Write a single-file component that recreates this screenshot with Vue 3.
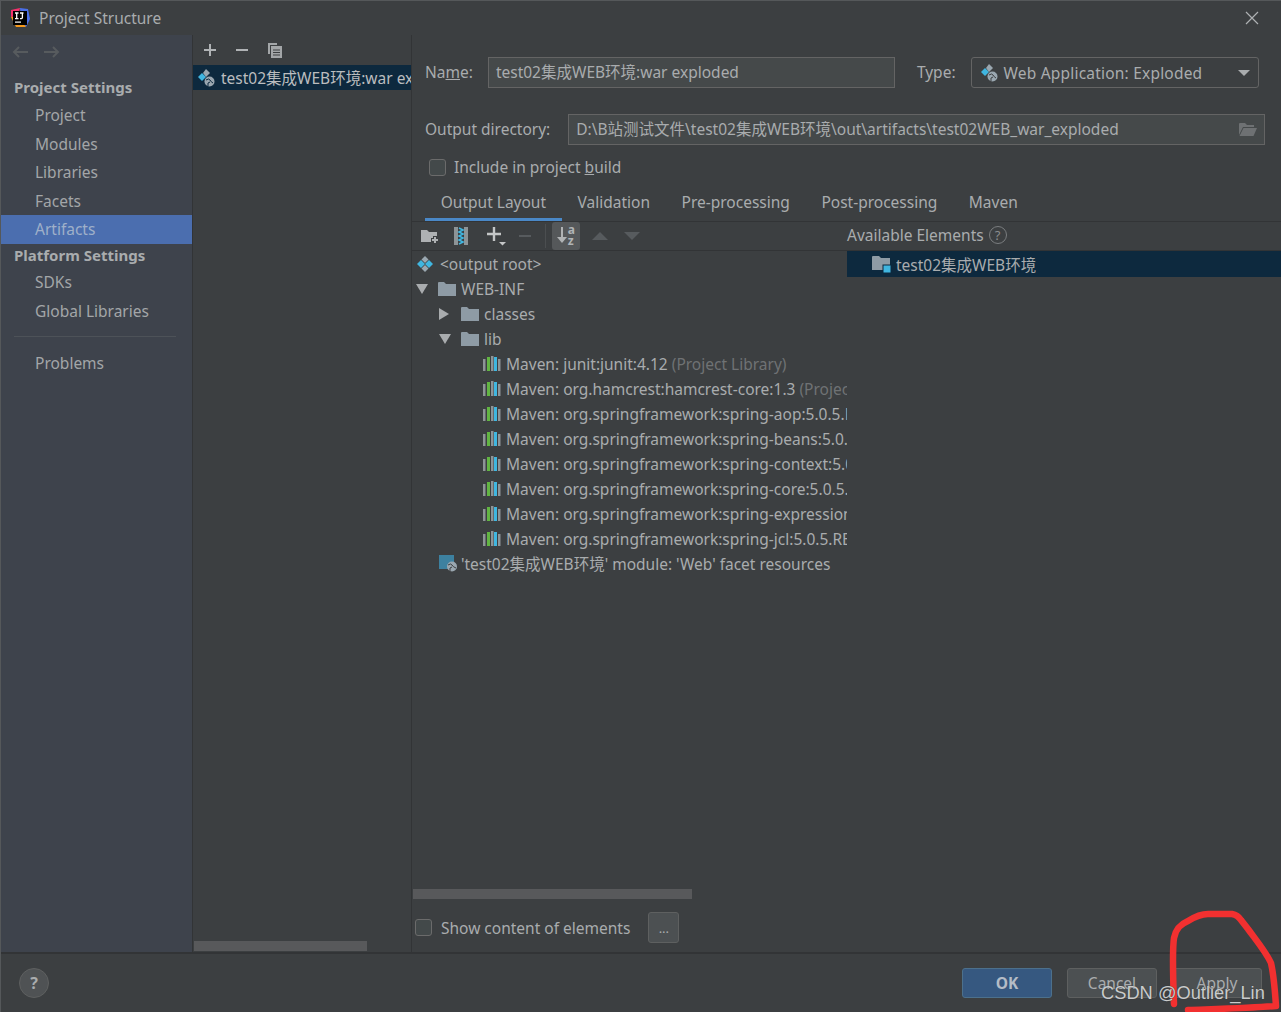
<script setup>
const sidebarTop = ['Project', 'Modules', 'Libraries', 'Facets', 'Artifacts']
const sidebarBottom = ['SDKs', 'Global Libraries']
const tabs = ['Output Layout', 'Validation', 'Pre-processing', 'Post-processing', 'Maven']
const libs = [
	{ name: 'Maven: junit:junit:4.12', hint: ' (Project Library)' },
	{ name: 'Maven: org.hamcrest:hamcrest-core:1.3', hint: ' (Project Library)' },
	{ name: 'Maven: org.springframework:spring-aop:5.0.5.RELEASE', hint: '' },
	{ name: 'Maven: org.springframework:spring-beans:5.0.5.RELEASE', hint: '' },
	{ name: 'Maven: org.springframework:spring-context:5.0.5.RELEASE', hint: '' },
	{ name: 'Maven: org.springframework:spring-core:5.0.5.RELEASE', hint: '' },
	{ name: 'Maven: org.springframework:spring-expression:5.0.5.RELEASE', hint: '' },
	{ name: 'Maven: org.springframework:spring-jcl:5.0.5.RELEASE', hint: '' }
]
</script>

<template>
	<div class="dialog">
		<header class="titlebar">
			<svg class="logo" width="20" height="20" viewBox="0 0 20 20">
				<path d="M1 2 L10 0 L8 8 L1 9 Z" fill="#f5316d" />
				<path d="M10 0 L18 1 L20 11 L16 19 L11 12 Z" fill="#4a6fe8" />
				<path d="M1 9 L6 19 L16 19 L8 8 Z" fill="#f79a1c" />
				<rect x="3" y="3" width="14" height="14" fill="#000" />
				<rect x="5" y="13.5" width="6" height="1.2" fill="#fff" />
				<path d="M5 5 h3.5 M6.7 5 v5.6 M5 10.6 h3.5 M10 5 h3.5 M12.4 5 v4.6 q0 1 -1 1 h-1.4" stroke="#fff" stroke-width="1.3" fill="none" />
			</svg>
			<span class="title">Project Structure</span>
			<svg class="close" width="14" height="14" viewBox="0 0 14 14">
				<path d="M1 1 L13 13 M13 1 L1 13" stroke="#aeb1b3" stroke-width="1.2" />
			</svg>
		</header>

		<div class="body">
			<aside class="sidebar">
				<div class="nav-arrows">
					<svg width="18" height="14" viewBox="0 0 18 14"><path d="M17 7 H3 M8 2 L3 7 L8 12" stroke="#575b5e" stroke-width="2" fill="none" /></svg>
					<svg width="18" height="14" viewBox="0 0 18 14"><path d="M1 7 H15 M10 2 L15 7 L10 12" stroke="#575b5e" stroke-width="2" fill="none" /></svg>
				</div>
				<div class="side-head">Project Settings</div>
				<div v-for="item in sidebarTop" :key="item" class="side-item" :class="{ selected: item === 'Artifacts' }">{{ item }}</div>
				<div class="side-head second">Platform Settings</div>
				<div v-for="item in sidebarBottom" :key="item" class="side-item">{{ item }}</div>
				<div class="side-divider"></div>
				<div class="side-item">Problems</div>
			</aside>

			<section class="artifacts">
				<div class="art-toolbar">
					<svg width="14" height="14" viewBox="0 0 14 14"><path d="M7 1 V13 M1 7 H13" stroke="#b0b3b5" stroke-width="2" /></svg>
					<svg width="14" height="14" viewBox="0 0 14 14"><path d="M1 7 H13" stroke="#b0b3b5" stroke-width="2" /></svg>
					<svg width="16" height="16" viewBox="0 0 16 16"><path d="M1 1 H10 V3 H3 V12 H1 Z" fill="#a3a6a8" /><path d="M4 4 H15 V16 H4 Z" fill="#a3a6a8" /><path d="M6 8 H13 M6 10.5 H13 M6 13 H13" stroke="#3c3f41" /></svg>
				</div>
				<div class="art-row">
					<svg class="ico" width="18" height="18" viewBox="0 0 18 18">
						<path d="M5 4 L9 8 L5 12 L1 8 Z" fill="#40b6e0" />
						<path d="M9 0 L13 4 L9 8 L6 4 Z" fill="#9aa7b0" />
						<circle cx="12.5" cy="12.5" r="5" fill="#9aa7b0" />
						<path d="M9 11 Q12 9 13 11 T16 14 M11 17 Q10 13 13 13" stroke="#0d293e" fill="none" />
					</svg>
					<span class="art-name">test02集成WEB环境:war exploded</span>
				</div>
				<div class="spacer"></div>
				<div class="art-scroll"><div class="thumb"></div></div>
			</section>

			<main class="editor">
				<div class="name-row">
					<label class="lbl">Na<u>m</u>e:</label>
					<div class="field name-field">test02集成WEB环境:war exploded</div>
					<label class="lbl type-lbl">Type:</label>
					<div class="combo">
						<svg class="ico" width="18" height="18" viewBox="0 0 18 18">
							<path d="M5 4 L9 8 L5 12 L1 8 Z" fill="#40b6e0" />
							<path d="M9 0 L13 4 L9 8 L6 4 Z" fill="#9aa7b0" />
							<circle cx="12.5" cy="12.5" r="5" fill="#9aa7b0" />
							<path d="M9 11 Q12 9 13 11 T16 14 M11 17 Q10 13 13 13" stroke="#3c3f41" fill="none" />
						</svg>
						<span class="combo-text">Web Application: Exploded</span>
						<span class="combo-arrow"></span>
					</div>
				</div>
				<div class="dir-row">
					<label class="lbl">Output directory:</label>
					<div class="field dir-field">
						<span>D:\B站测试文件\test02集成WEB环境\out\artifacts\test02WEB_war_exploded</span>
						<svg width="20" height="16" viewBox="0 0 20 16"><path d="M1 3 Q1 2 2 2 H7 L9 4 H16 V6 H5 L1 14 Z" fill="#6e7173" /><path d="M5.5 7 H19 L15.5 15 H1.5 Z" fill="#6e7173" /></svg>
					</div>
				</div>
				<div class="check-row">
					<span class="check"></span>
					<span>Include in project <u>b</u>uild</span>
				</div>
				<nav class="tabs">
					<div v-for="(tab, i) in tabs" :key="tab" class="tab" :class="{ active: i === 0 }">{{ tab }}</div>
				</nav>

				<div class="layout">
					<div class="tree-pane">
						<div class="tree-toolbar">
							<svg width="20" height="18" viewBox="0 0 20 18"><path d="M1 3 H7 L9 5 H17 V15 H1 Z" fill="#aeb1b3" /><path d="M15 9 V17 M11 13 H19" stroke="#3c3f41" stroke-width="4" /><path d="M15 10 V16 M12 13 H18" stroke="#aeb1b3" stroke-width="2" /></svg>
							<svg class="tool-zip" width="16" height="20" viewBox="0 0 16 20"><rect x="1" y="1" width="14" height="18" fill="#8d9497" /><rect x="5" y="1" width="6" height="18" fill="#3c3f41" /><path d="M6 2 L10 4 L6 6 L10 8 L6 10 L10 12 L6 14 L10 16 L6 18" stroke="#40b6e0" stroke-width="1.6" fill="none" /></svg>
							<svg class="tool-add" width="20" height="20" viewBox="0 0 20 20"><path d="M8 1 V15 M1 8 H15" stroke="#c4c6c7" stroke-width="2.4" /><path d="M13 16 H20 L16.5 19.5 Z" fill="#c4c6c7" /></svg>
							<svg class="tool-minus" width="14" height="14" viewBox="0 0 14 14"><path d="M1 7 H13" stroke="#575b5e" stroke-width="2" /></svg>
							<span class="tool-sep"></span>
							<span class="sort-btn">
								<svg width="20" height="20" viewBox="0 0 20 20"><path d="M7 1 V12" stroke="#b0b3b5" stroke-width="2" /><path d="M2 11 H12 L7 17 Z" fill="#b0b3b5" /></svg>
								<span class="az">a<br />z</span>
							</span>
							<svg width="16" height="9" viewBox="0 0 16 9"><path d="M8 0 L16 8 H0 Z" fill="#575b5e" /></svg>
							<svg class="tool-down" width="16" height="9" viewBox="0 0 16 9"><path d="M0 0 H16 L8 8 Z" fill="#575b5e" /></svg>
						</div>

						<div class="tree">
							<div class="node indent-0">
								<svg class="ico" width="18" height="18" viewBox="0 0 18 18">
									<path d="M5 5 L9 9 L5 13 L1 9 Z" fill="#40b6e0" /><path d="M13 5 L17 9 L13 13 L9 9 Z" fill="#40b6e0" />
									<path d="M9 1 L12.5 4.5 L9 8 L5.5 4.5 Z" fill="#9aa7b0" /><path d="M9 10 L12.5 13.5 L9 17 L5.5 13.5 Z" fill="#9aa7b0" />
								</svg>
								<span>&lt;output root&gt;</span>
							</div>
							<div class="node indent-0">
								<span class="caret down"></span>
								<svg class="folder" width="18" height="14" viewBox="0 0 18 14"><path d="M0 1 Q0 0 1 0 H6 L8 2 H18 V14 H0 Z" fill="#8e9ba5" /></svg>
								<span>WEB-INF</span>
							</div>
							<div class="node indent-1">
								<span class="caret right"></span>
								<svg class="folder" width="18" height="14" viewBox="0 0 18 14"><path d="M0 1 Q0 0 1 0 H6 L8 2 H18 V14 H0 Z" fill="#8e9ba5" /></svg>
								<span>classes</span>
							</div>
							<div class="node indent-1">
								<span class="caret down"></span>
								<svg class="folder" width="18" height="14" viewBox="0 0 18 14"><path d="M0 1 Q0 0 1 0 H6 L8 2 H18 V14 H0 Z" fill="#8e9ba5" /></svg>
								<span>lib</span>
							</div>
							<div v-for="lib in libs" :key="lib.name" class="node indent-2">
								<svg class="ico-lib" width="18" height="15" viewBox="0 0 18 15">
									<rect x="0" y="3" width="2.5" height="12" fill="#8d9497" />
									<rect x="4" y="1" width="3" height="14" fill="#62b543" />
									<rect x="8" y="0" width="2.5" height="15" fill="#8d9497" />
									<rect x="11" y="1" width="3" height="14" fill="#40b6e0" />
									<rect x="15" y="3" width="2.5" height="12" fill="#8d9497" />
								</svg>
								<span class="clip">{{ lib.name }}<span class="hint">{{ lib.hint }}</span></span>
							</div>
							<div class="node indent-facet">
								<svg class="ico" width="19" height="17" viewBox="0 0 19 17">
									<rect x="0" y="0" width="15" height="14" fill="#3d81a0" />
									<circle cx="13" cy="11.5" r="5" fill="#9aa7b0" />
									<path d="M9 10 Q12 8 13 10 T17 13 M11 16 Q10 12 13 12" stroke="#3c3f41" fill="none" />
								</svg>
								<span>'test02集成WEB环境' module: 'Web' facet resources</span>
							</div>
						</div>

						<div class="tree-scroll"><div class="thumb"></div></div>
						<div class="show-row">
							<span class="check"></span>
							<span>Show content of elements</span>
							<span class="dots">...</span>
						</div>
					</div>

					<div class="avail-pane">
						<div class="avail-head">
							<span>Available Elements</span>
							<span class="help-small">?</span>
						</div>
						<div class="avail-row">
							<svg class="folder" width="20" height="18" viewBox="0 0 20 18">
								<path d="M0 2 Q0 1 1 1 H7 L9 3 H18 V15 H0 Z" fill="#8e9ba5" />
								<rect x="11" y="10" width="8" height="8" fill="#40b6e0" stroke="#0d293e" />
							</svg>
							<span>test02集成WEB环境</span>
						</div>
					</div>
				</div>
			</main>
		</div>

		<footer class="footer">
			<span class="help">?</span>
			<span class="btn ok">OK</span>
			<span class="btn cancel">Cancel</span>
			<span class="btn apply">Apply</span>
		</footer>

		<svg class="scribble" width="120" height="110" viewBox="0 0 120 110">
			<path d="M8 98 C7 70 6 45 8 32 C10 22 15 18 22 15 C30 10 36 8 42 8 L66 8 C71 9 73 11 75 14 L82 23 C90 34 100 46 105 57 C108 70 109 85 110 100 C90 102 50 103 22 104" fill="none" stroke="#f23030" stroke-width="6.5" stroke-linecap="round" stroke-linejoin="round" />
		</svg>
		<div class="watermark">CSDN @Outlier_Lin</div>
	</div>
</template>

<style scoped>
.dialog {
	position: relative;
	width: 1281px;
	height: 1012px;
	display: flex;
	flex-direction: column;
	overflow: hidden;
	background: #3c3f41;
	color: #b4b7b9;
	font-family: "Noto Sans", "Noto Sans CJK SC", sans-serif;
	font-size: 15.5px;
	box-sizing: border-box;
	border-top: 1px solid #55585a;
	border-left: 1px solid #55585a;
}

.titlebar {
	height: 34px;
	flex: none;
	display: flex;
	align-items: center;
	padding-left: 9px;
}

.title {
	margin-left: 9px;
	color: #a9acae;
}

.close {
	margin-left: auto;
	margin-right: 22px;
}

.body {
	flex: 1;
	min-height: 0;
	display: flex;
	border-bottom: 2px solid #323436;
}

.sidebar {
	width: 191px;
	flex: none;
	background: #3e434c;
	border-right: 1px solid #323436;
}

.nav-arrows {
	height: 34px;
	display: flex;
	align-items: center;
	gap: 14px;
	padding-left: 10px;
}

.side-head {
	height: 27px;
	line-height: 27px;
	padding-left: 13px;
	margin-top: 5px;
	font-size: 15px;
	font-weight: 700;
	color: #a9acae;
}

.side-head.second {
	margin-top: 0;
	height: 24px;
	line-height: 22px;
}

.side-item {
	height: 28.6px;
	line-height: 28.6px;
	padding-left: 34px;
	color: #a3a6a8;
}

.side-item.selected {
	background: #4b6eaf;
	color: #9fb0c9;
}

.side-divider {
	height: 1px;
	margin: 11px 16px 12px 13px;
	background: #4d5258;
}

.artifacts {
	width: 218px;
	flex: none;
	display: flex;
	flex-direction: column;
	border-right: 1px solid #323436;
}

.art-toolbar {
	height: 30px;
	flex: none;
	display: flex;
	align-items: center;
	gap: 18px;
	padding-left: 10px;
}

.art-row {
	height: 25px;
	flex: none;
	display: flex;
	align-items: center;
	background: #0d293e;
	padding-left: 4px;
	overflow: hidden;
	white-space: nowrap;
	color: #bbbdbf;
}

.ico {
	flex: none;
}

.art-name {
	margin-left: 6px;
	flex: none;
}

.spacer {
	flex: 1;
}

.art-scroll {
	height: 11px;
	padding-left: 1px;
}

.art-scroll .thumb {
	width: 173px;
	height: 10px;
	background: #58595b;
}

.editor {
	flex: 1;
	min-width: 0;
	display: flex;
	flex-direction: column;
}

.lbl {
	color: #a9acae;
	white-space: nowrap;
	margin-bottom: 2px;
}

.name-row {
	height: 31px;
	margin-top: 22px;
	padding-left: 13px;
	display: flex;
	align-items: center;
	flex: none;
}

.field {
	background: #45494a;
	border: 1px solid #646464;
	box-sizing: border-box;
	color: #a9acae;
	display: flex;
	align-items: center;
	white-space: nowrap;
	padding-left: 7px;
	padding-bottom: 2px;
}

.name-field {
	width: 407px;
	height: 31px;
	margin-left: 15px;
}

.type-lbl {
	margin-left: 22px;
}

.combo {
	width: 288px;
	height: 31px;
	margin-left: 15px;
	box-sizing: border-box;
	border: 1px solid #646464;
	border-radius: 3px;
	display: flex;
	align-items: center;
	padding-left: 8px;
	color: #a9acae;
}

.combo-text {
	margin-left: 6px;
	letter-spacing: 0.2px;
}

.combo-arrow {
	margin-left: auto;
	margin-right: 8px;
	border-left: 6px solid transparent;
	border-right: 6px solid transparent;
	border-top: 6px solid #a9acae;
}

.dir-row {
	height: 31px;
	margin-top: 26px;
	padding-left: 13px;
	display: flex;
	align-items: center;
	flex: none;
}

.dir-field {
	width: 697px;
	height: 31px;
	margin-left: 18px;
	flex: none;
	justify-content: space-between;
	padding-right: 6px;
}

.check-row {
	height: 24px;
	margin-top: 10px;
	padding-left: 17px;
	display: flex;
	align-items: center;
	gap: 8px;
	flex: none;
	color: #a9acae;
}

.check {
	width: 17px;
	height: 17px;
	flex: none;
	background: #43494a;
	border: 1px solid #6b6b6b;
	border-radius: 3px;
	box-sizing: border-box;
}

.tabs {
	height: 33px;
	margin-top: 9px;
	padding-left: 13px;
	display: flex;
	flex: none;
	border-bottom: 1px solid #323436;
}

.tab {
	padding: 3px 15.75px 0;
	color: #a9acae;
	white-space: nowrap;
}

.tab.active {
	border-bottom: 3px solid #4a88c7;
}

.layout {
	flex: 1;
	min-height: 0;
	display: flex;
}

.tree-pane {
	width: 435px;
	flex: none;
	display: flex;
	flex-direction: column;
}

.tree-toolbar {
	height: 29px;
	flex: none;
	display: flex;
	align-items: center;
	gap: 10px;
	padding-left: 8px;
	border-bottom: 1px solid #323436;
	box-sizing: border-box;
	width: 1000px;
}

.tool-zip {
	margin-left: 3px;
}

.tool-add {
	margin-left: 7px;
}

.tool-minus {
	margin-left: 2px;
}

.tool-sep {
	width: 1px;
	height: 24px;
	margin-left: 3px;
	background: #4b4e50;
}

.sort-btn {
	width: 28px;
	height: 28px;
	margin-left: -4px;
	margin-right: 2px;
	background: #55585a;
	border-radius: 3px;
	position: relative;
	display: flex;
	align-items: center;
	padding-left: 3px;
	box-sizing: border-box;
}

.az {
	position: absolute;
	right: 5px;
	top: 2px;
	font-size: 12px;
	line-height: 11px;
	font-weight: 700;
	color: #b0b3b5;
}

.tool-down {
	margin-left: 6px;
}

.tree {
	flex: 1;
	min-height: 0;
}

.node {
	height: 25px;
	display: flex;
	align-items: center;
	white-space: nowrap;
	overflow: hidden;
	color: #a9acae;
}

.indent-0 {
	padding-left: 4px;
}

.indent-1 {
	padding-left: 27px;
}

.indent-2 {
	padding-left: 71px;
}

.indent-facet {
	padding-left: 27px;
}

.indent-0 .ico {
	margin-right: 6px;
}

.indent-facet .ico {
	margin-right: 3px;
}

.caret {
	width: 12px;
	height: 12px;
	flex: none;
	margin-right: 10px;
	display: flex;
	box-sizing: border-box;
}

.caret.down {
	border-left: 6px solid transparent;
	border-right: 6px solid transparent;
	border-top: 10px solid #a9acae;
	margin-top: 2px;
}

.caret.right {
	border-top: 6px solid transparent;
	border-bottom: 6px solid transparent;
	border-left: 10px solid #a9acae;
}

.folder {
	margin-right: 5px;
	flex: none;
}

.ico-lib {
	margin-right: 5px;
	flex: none;
}

.hint {
	color: #6f7274;
}

.tree-scroll {
	height: 10px;
	flex: none;
	padding-left: 1px;
}

.tree-scroll .thumb {
	width: 279px;
	height: 10px;
	background: #58595b;
}

.show-row {
	height: 31px;
	margin: 13px 0 9px;
	padding-left: 3px;
	display: flex;
	align-items: center;
	gap: 9px;
	flex: none;
	color: #a9acae;
}

.dots {
	width: 31px;
	height: 31px;
	margin-left: 9px;
	box-sizing: border-box;
	background: #4c5052;
	border: 1px solid #5e6060;
	border-radius: 3px;
	display: flex;
	align-items: center;
	justify-content: center;
	font-size: 13px;
}

.avail-pane {
	flex: 1;
	min-width: 0;
}

.avail-head {
	height: 25px;
	display: flex;
	align-items: center;
	gap: 5px;
	color: #a9acae;
	position: relative;
}

.help-small {
	width: 18px;
	height: 18px;
	box-sizing: border-box;
	border: 1.5px solid #7a7d7f;
	border-radius: 50%;
	display: flex;
	align-items: center;
	justify-content: center;
	font-size: 13px;
	color: #8a8d8f;
}

.avail-row {
	height: 26px;
	margin-top: 4px;
	background: #0d293e;
	display: flex;
	align-items: center;
	padding-left: 25px;
	color: #a9acae;
	white-space: nowrap;
	position: relative;
}

.avail-row .folder {
	margin-right: 4px;
}

.footer {
	height: 58px;
	flex: none;
	display: flex;
	align-items: center;
	padding-left: 18px;
}

.help {
	width: 30px;
	height: 30px;
	border-radius: 50%;
	background: #4f5254;
	border: 1px solid #5e6060;
	box-sizing: border-box;
	display: flex;
	align-items: center;
	justify-content: center;
	font-weight: 700;
	font-size: 16px;
	color: #a9acae;
}

.btn {
	width: 90px;
	height: 30px;
	box-sizing: border-box;
	border-radius: 3px;
	display: flex;
	align-items: center;
	justify-content: center;
	margin-left: 15px;
	background: #4c5052;
	border: 1px solid #5e6060;
	color: #a9acae;
}

.btn.ok {
	margin-left: auto;
	background: #365880;
	border-color: #4c708c;
	font-weight: 700;
	color: #b4bcc6;
}

.btn.apply {
	margin-right: 19px;
}

.scribble {
	position: absolute;
	left: 1165px;
	top: 905px;
	pointer-events: none;
}

.watermark {
	position: absolute;
	left: 1100px;
	top: 978px;
	font-family: "Liberation Sans", sans-serif;
	font-size: 18.3px;
	line-height: 28px;
	color: #c9cbcc;
	white-space: nowrap;
	text-shadow: 0 0 1px #333;
}
</style>
